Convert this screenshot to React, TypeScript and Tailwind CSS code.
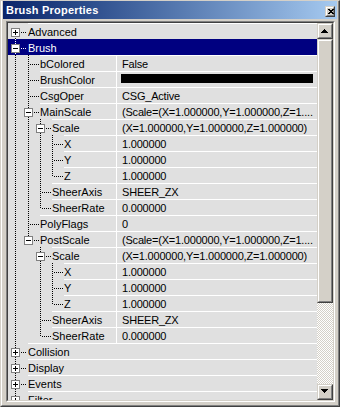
import React from 'react'

type Prop = {
    name: string
    value?: string
    swatch?: boolean
    open?: boolean
    kids?: Prop[]
    selected?: boolean
}

type Row = Prop & { level: number; last: boolean; first: boolean; cont: boolean[] }

// x of the tree guide for each depth, and where the label starts
const GX = [7, 20, 32, 44, 56]
const MID = 9

const xyz = (): Prop[] => [
    { name: 'X', value: '1.000000' },
    { name: 'Y', value: '1.000000' },
    { name: 'Z', value: '1.000000' },
]

const scaleGroup = (name: string): Prop => ({
    name,
    value: '(Scale=(X=1.000000,Y=1.000000,Z=1....',
    open: true,
    kids: [
        { name: 'Scale', value: '(X=1.000000,Y=1.000000,Z=1.000000)', open: true, kids: xyz() },
        { name: 'SheerAxis', value: 'SHEER_ZX' },
        { name: 'SheerRate', value: '0.000000' },
    ],
})

const tree: Prop[] = [
    { name: 'Advanced', kids: [] },
    {
        name: 'Brush',
        open: true,
        selected: true,
        kids: [
            { name: 'bColored', value: 'False' },
            { name: 'BrushColor', swatch: true },
            { name: 'CsgOper', value: 'CSG_Active' },
            scaleGroup('MainScale'),
            { name: 'PolyFlags', value: '0' },
            scaleGroup('PostScale'),
        ],
    },
    { name: 'Collision', kids: [] },
    { name: 'Display', kids: [] },
    { name: 'Events', kids: [] },
    { name: 'Filter', kids: [] },
    { name: 'Force', kids: [] },
    { name: 'Karma', kids: [] },
]

function flatten(nodes: Prop[], level: number, cont: boolean[], out: Row[]) {
    nodes.forEach((n, i) => {
        const last = i === nodes.length - 1
        out.push({ ...n, level, last, first: level === 0 && i === 0, cont })
        if (n.open && n.kids) flatten(n.kids, level + 1, [...cont, !last], out)
    })
    return out
}

const rows = flatten(tree, 0, [], [])

function Guides({ row }: { row: Row }) {
    const w = GX[row.level + 1]
    const gx = GX[row.level]
    const dot = row.selected ? '#ffffff' : '#000000'
    const hasBox = !!row.kids
    return (
        <svg width={w} height={16} className="shrink-0 block" shapeRendering="crispEdges">
            {row.cont.map((on, k) =>
                on ? (
                    <line key={k} x1={GX[k] + 0.5} y1={0} x2={GX[k] + 0.5} y2={16} stroke={dot} strokeDasharray="1 1" />
                ) : null
            )}
            <line
                x1={gx + 0.5}
                y1={row.first ? MID : 0}
                x2={gx + 0.5}
                y2={row.last ? MID + 1 : 16}
                stroke={dot}
                strokeDasharray="1 1"
            />
            <line x1={hasBox ? gx + 6 : gx + 2} y1={MID + 0.5} x2={w - 1} y2={MID + 0.5} stroke={dot} strokeDasharray="1 1" />
            {hasBox && (
                <g>
                    <rect x={gx - 3.5} y={MID - 3.5} width={8} height={8} fill="#ffffff" stroke="#808080" />
                    <line x1={gx - 2} y1={MID + 0.5} x2={gx + 3} y2={MID + 0.5} stroke="#000000" />
                    {!row.open && <line x1={gx + 0.5} y1={MID - 2} x2={gx + 0.5} y2={MID + 3} stroke="#000000" />}
                </g>
            )}
        </svg>
    )
}

function TreeRow({ row }: { row: Row }) {
    if (row.level === 0) {
        const sel = !!row.selected
        return (
            <div className={`flex h-[16px] ${sel ? 'bg-[#000080]' : ''}`}>
                <Guides row={row} />
                <span
                    className={`flex-1 h-full overflow-hidden whitespace-nowrap border-t leading-[16px] ${
                        sel ? 'border-[#000080] text-white' : 'border-white text-black'
                    }`}
                >
                    {row.name}
                </span>
            </div>
        )
    }
    return (
        <div className="flex h-[16px]">
            <div className="flex w-[109px] shrink-0 border-r border-white">
                <Guides row={row} />
                <span className="flex-1 h-full overflow-hidden whitespace-nowrap border-t border-white leading-[16px]">
                    {row.name}
                </span>
            </div>
            <div className="flex-1 min-w-0 h-full overflow-hidden whitespace-nowrap border-t border-white">
                {row.swatch ? (
                    <div className="mx-[4px] mt-[2px] h-[9px] bg-black" />
                ) : (
                    <span className="block pl-[5px] leading-[16px] tracking-[-0.2px]">{row.value}</span>
                )}
            </div>
        </div>
    )
}

function Raised({ className, children }: { className?: string; children?: React.ReactNode }) {
    return (
        <div className={`border border-t-[#d4d0c8] border-l-[#d4d0c8] border-r-[#404040] border-b-[#404040] ${className ?? ''}`}>
            <div className="h-full border border-t-white border-l-white border-r-[#808080] border-b-[#808080] bg-[#d4d0c8]">
                {children}
            </div>
        </div>
    )
}

function Arrow({ down }: { down?: boolean }) {
    const r = down ? [0, 1, 2, 3] : [3, 2, 1, 0]
    return (
        <svg width={7} height={4} className="block" shapeRendering="crispEdges">
            {r.map((inset, y) => (
                <rect key={y} x={inset} y={y} width={7 - inset * 2} height={1} fill="#000000" />
            ))}
        </svg>
    )
}

function ScrollBar() {
    return (
        <div className="w-[16px] shrink-0 flex flex-col">
            <Raised className="h-[16px]">
                <div className="pl-[2px] pt-[4px]">
                    <Arrow />
                </div>
            </Raised>
            <Raised className="h-[264px]" />
            <div className="flex-1 bg-[image:repeating-conic-gradient(#ffffff_0%_25%,#d4d0c8_0%_50%)] bg-[length:2px_2px]" />
            <Raised className="h-[16px]">
                <div className="pl-[2px] pt-[3px]">
                    <Arrow down />
                </div>
            </Raised>
        </div>
    )
}

export default function App() {
    return (
        <div className="w-[340px] h-[407px] overflow-hidden bg-[#d4d0c8] font-['Liberation_Sans',Arial,sans-serif] text-[11px] text-black">
            <div className="h-full border border-t-[#d4d0c8] border-l-[#d4d0c8] border-r-[#404040] border-b-[#404040]">
                <div className="h-full flex flex-col border-l border-r border-b border-l-white border-r-[#808080] border-b-[#808080] px-px pb-[3px]">
                    {/* caption */}
                    <div className="h-[18px] shrink-0 flex items-start justify-between bg-gradient-to-r from-[#0a246a] to-[#a6caf0] pl-[3px] pr-[2px]">
                        <span className="pt-[2px] text-white font-bold text-[11px] tracking-[0.2px] leading-[14px]">
                            Brush Properties
                        </span>
                        <Raised className="mt-[5px] w-[10px] h-[11px]">
                            <svg width={6} height={5} className="block ml-[1px] mt-[1px]" shapeRendering="crispEdges">
                                {[0, 1, 2, 3, 4].map((i) => (
                                    <g key={i}>
                                        <rect x={i} y={i} width={2} height={1} fill="#000" />
                                        <rect x={4 - i} y={i} width={2} height={1} fill="#000" />
                                    </g>
                                ))}
                            </svg>
                        </Raised>
                    </div>

                    {/* property panel */}
                    <div className="mt-[2px] ml-[3px] mr-[2px] flex-1 min-h-0 border border-t-[#808080] border-l-[#808080] border-r-white border-b-white">
                        <div className="h-full flex border border-t-[#404040] border-l-[#404040] border-r-[#d4d0c8] border-b-[#d4d0c8]">
                            <div className="flex-1 min-w-0 overflow-hidden bg-[#e0e0e0]">
                                {rows.map((r, i) => (
                                    <TreeRow key={i} row={r} />
                                ))}
                            </div>
                            <ScrollBar />
                        </div>
                    </div>
                </div>
            </div>
        </div>
    )
}
